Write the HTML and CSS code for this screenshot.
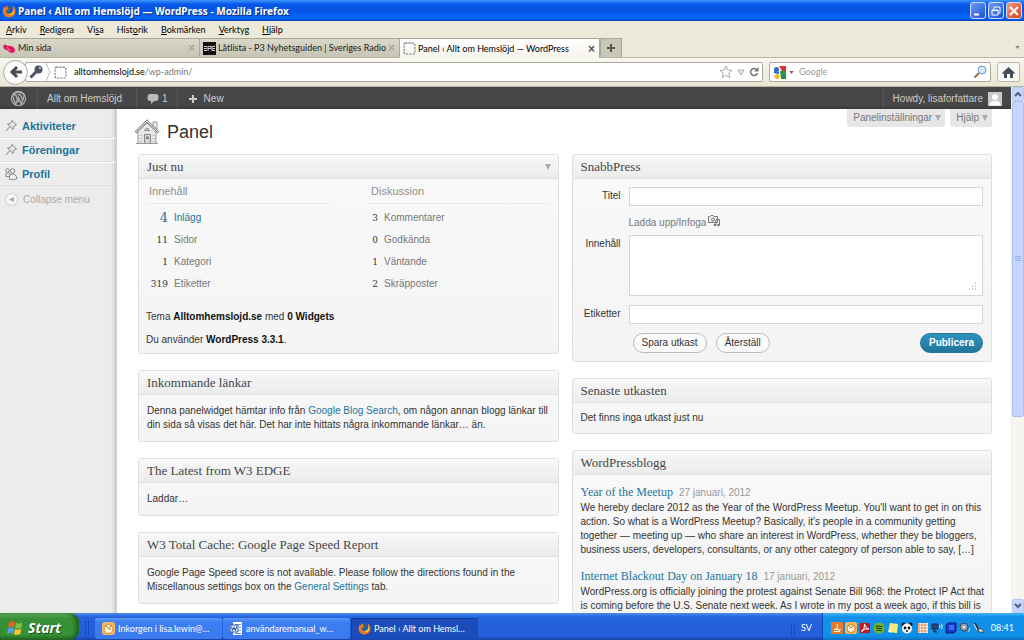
FILE: index.html
```html
<!DOCTYPE html>
<html lang="sv">
<head>
<meta charset="utf-8">
<title>Panel ‹ Allt om Hemslöjd — WordPress</title>
<link rel="stylesheet" href="styles.css">
</head>
<body>
<svg class="defs" width="0" height="0" aria-hidden="true">
  <defs>
    <symbol id="fox" viewBox="0 0 16 16">
      <circle cx="8" cy="8" r="7" fill="#2b5c9e"/>
      <path d="M2 3Q0 7 1 10Q3 15 8 15.500Q15 15 15.500 8Q15 3 12 2Q14 6 12 9Q10 12 7 11Q4 10 5 7L8 6L6 4L7 2Q4 2 3.500 4Z" fill="#ef7a1c"/>
      <path d="M12 2Q14 6 12 9Q10 12 7 11Q10 14 13 11Q15 8 12 2Z" fill="#fbc43c"/>
    </symbol>
    <symbol id="pin" viewBox="0 0 12 12">
      <path d="M7 .5L11.500 5L10 5.500L8.500 7L8 9.500L2.500 4L5 3.500L6.500 2ZM4.500 7L1 11" fill="#e3e3e3" stroke="#888" stroke-width="1"/>
    </symbol>
    <symbol id="dashed" viewBox="0 0 12 12">
      <rect x="1" y="1" width="10" height="10" rx="1" fill="none" stroke="#777" stroke-dasharray="2 1"/>
    </symbol>
  </defs>
</svg>

<header class="titlebar">
  <svg class="i14"><use href="#fox"/></svg>
  <span class="title">Panel ‹ Allt om Hemslöjd — WordPress - Mozilla Firefox</span>
  <button class="win" aria-label="Minimera"><svg viewBox="0 0 14 14"><path d="M3 10.500H8" stroke="#fff" stroke-width="2"/></svg></button>
  <button class="win" aria-label="Återställ fönster"><svg viewBox="0 0 14 14"><path d="M5 5V3H11V9H9M3 6H9V11H3ZM3 6.500H9" fill="none" stroke="#fff"/></svg></button>
  <button class="win close" aria-label="Stäng"><svg viewBox="0 0 14 14"><path d="M3 3L11 11M11 3L3 11" stroke="#fff" stroke-width="2"/></svg></button>
</header>

<nav class="menubar">
  <a href="#"><u>A</u>rkiv</a><a href="#"><u>R</u>edigera</a><a href="#">Vi<u>s</u>a</a><a href="#">Hist<u>o</u>rik</a><a href="#"><u>B</u>okmärken</a><a href="#"><u>V</u>erktyg</a><a href="#"><u>H</u>jälp</a>
</nav>

<div class="tabs">
  <div class="tab"><svg class="i13" viewBox="0 0 13 13"><path d="M0 4Q2 1 5 4Q9 3 12 7Q12 11 9 11Q6 11 4 8Q1 8 0 4Z" fill="#e3175b"/><path d="M4 5L7 9" stroke="#f8a9c4"/></svg><span class="label">Min sida</span><button class="x" aria-label="Stäng flik">×</button></div>
  <div class="tab"><svg class="i13" viewBox="0 0 13 13"><path d="M0 0H13V13H0Z" fill="#111"/><path d="M1 4.500H4M1 6.500H4M1 8.500H4M5 4V9M5 4.500H8V6.500H5M9 4.500H12M9 6.500H12M9 8.500H12M9 4V9" stroke="#ccc"/></svg><span class="label">Låtlista - P3 Nyhetsguiden | Sveriges Radio</span><button class="x" aria-label="Stäng flik">×</button></div>
  <div class="tab active"><svg class="i13"><use href="#dashed"/></svg><span class="label">Panel ‹ Allt om Hemslöjd — WordPress</span><button class="x" aria-label="Stäng flik">×</button></div>
  <button class="newtab" aria-label="Ny flik"><svg class="i10" viewBox="0 0 10 10"><path d="M5 1V9M1 5H9" stroke="#555" stroke-width="2"/></svg></button>
  <svg class="alltabs" viewBox="0 0 6 4"><path d="M0 0H6L3 4Z" fill="#888"/></svg>
</div>

<div class="navbar">
  <button class="back" aria-label="Tillbaka"><svg class="i14" viewBox="0 0 14 14"><path d="M8 2L3 7L8 12M3 7H13" fill="none" stroke="#474d55" stroke-width="3"/></svg></button>
  <div class="url">
    <svg class="i14" viewBox="0 0 14 14"><circle cx="9.500" cy="4.500" r="4" fill="#4b5561"/><path d="M8 6L1.500 12.500" stroke="#4b5561" stroke-width="3"/><circle cx="11" cy="3" r="1" fill="#ddd"/></svg>
    <svg class="chev" viewBox="0 0 5 18"><path d="M0 0L4 9L0 18" fill="none" stroke="#bbb"/></svg>
    <svg class="i13"><use href="#dashed"/></svg>
    <input class="address" aria-label="Adress" value="alltomhemslojd.se/wp-admin/">
    <span class="shown"><b>alltomhemslojd.se</b>/wp-admin/</span>
    <svg class="i14" viewBox="0 0 14 14"><path d="M7 1L8.800 5L13 5.400L9.800 8.200L10.800 12.500L7 10.300L3.200 12.500L4.200 8.200L1 5.400L5.200 5Z" fill="#fff" stroke="#aaa"/></svg>
    <svg class="i10" viewBox="0 0 10 10"><path d="M2 3H8L5 8Z" fill="#eee" stroke="#aaa"/></svg>
    <svg class="i10" viewBox="0 0 10 10"><path d="M8.500 6A3.500 3.500 0 1 1 7.500 2.500" fill="none" stroke="#777" stroke-width="1.500"/><path d="M9.500 0V4.500H5Z" fill="#777"/></svg>
  </div>
  <div class="search">
    <svg class="i13" viewBox="0 0 13 13"><path d="M0 0H6V6H0Z" fill="#fff"/><circle cx="3.500" cy="3.500" r="2.500" fill="#2b68c9"/><path d="M6 0H13V5H9Z" fill="#d9342b"/><path d="M7 5H13V13H8Z" fill="#27984a"/><circle cx="4" cy="10.500" r="2.500" fill="#f1b824"/><path d="M1 6L6 7" stroke="#2b68c9" stroke-width="2"/></svg>
    <svg class="drop" viewBox="0 0 6 4"><path d="M0 0H6L3 4Z" fill="#a55"/></svg>
    <input aria-label="Sök" placeholder="Google">
    <svg class="i14" viewBox="0 0 14 14"><path d="M6 8L1.500 12.500" stroke="#a56a3a" stroke-width="2"/><circle cx="9" cy="5" r="4" fill="#cfe8fa" stroke="#6e9cc4"/></svg>
  </div>
  <button class="home" aria-label="Hem"><svg class="i13" viewBox="0 0 13 13"><path d="M0 7L6.500 1L13 7L12 8L11 7V12H8V8H5V12H2V7L1 8Z" fill="#454f5c"/></svg></button>
</div>

<div class="viewport">
  <div class="page">
    <div class="adminbar">
      <a href="#" class="wp" aria-label="WordPress"><svg viewBox="0 0 18 18"><circle cx="9" cy="9" r="7.500" fill="none" stroke="#aaa" stroke-width="1.300"/><path d="M2.500 6L6 15L9 8L12 15L15 6Q14 2.500 9 2.500Q5 2.500 3.500 5H6L9 13M8 5H11L14 12" fill="none" stroke="#aaa" stroke-width="1.600"/></svg></a>
      <a href="#" class="site">Allt om Hemslöjd</a>
      <a href="#" class="bubble"><svg class="i12" viewBox="0 0 12 12"><path d="M3 1H9Q11.500 1 11.500 4Q11.500 8 9 8H7L4 11V8H3Q.5 8 .5 4.500Q.5 1 3 1Z" fill="#bbb"/></svg>1</a>
      <a href="#" class="new"><svg class="i10" viewBox="0 0 10 10"><path d="M5 1V9M1 5H9" stroke="#ccc" stroke-width="2"/></svg>New</a>
      <a href="#" class="user">Howdy, lisaforfattare<svg class="i14" viewBox="0 0 14 14"><path d="M0 0H14V14H0Z" fill="#c9c9c9"/><circle cx="7" cy="5" r="3" fill="#fff"/><path d="M1.500 13.500Q2 9 5.500 9H8.500Q12 9 12.500 13.500Z" fill="#fff"/></svg></a>
    </div>
    <div class="columns">
      <nav class="side">
        <a href="#"><svg class="i12"><use href="#pin"/></svg>Aktiviteter</a>
        <a href="#"><svg class="i12"><use href="#pin"/></svg>Föreningar</a>
        <a href="#"><svg class="i12" viewBox="0 0 12 12"><g fill="#eee" stroke="#888"><circle cx="2.500" cy="2.500" r="1.800"/><path d="M1 8.500Q0 5 3 4.500L5 6V8.500Z"/><circle cx="7.500" cy="3" r="2.300"/><path d="M4.500 11.500Q3.500 8.500 6 6H9L11.500 8.500V11L9.500 11.500Z"/></g></svg>Profil</a>
        <button class="collapse"><svg class="i13" viewBox="0 0 13 13"><circle cx="6.500" cy="6.500" r="6" fill="#f7f7f7" stroke="#ccc"/><path d="M9 4V9L4 6.500Z" fill="#aaa"/></svg>Collapse menu</button>
      </nav>
      <main>
        <div class="head">
          <svg class="house" viewBox="0 0 26 26"><path d="M19 3H23V11L19 8Z" fill="#eee" stroke="#999"/><path d="M4 12V24.500H22V12L13 4Z" fill="#e8e8e8" stroke="#999"/><path d="M1.500 13.500L13 2L24.500 13.500" fill="none" stroke="#888" stroke-width="2.500"/><path d="M1.500 13.500L13 2L24.500 13.500" fill="none" stroke="#e8e8e8" stroke-width="1"/><path d="M10.500 15.500H16.500V24.500H10.500ZM10.500 11.500Q13 7 15.500 11.500Z" fill="#d4d4d4" stroke="#888"/><path d="M5 16.500H9M5 19.500H9M18 16.500H21M18 19.500H21M5 22.500H9M18 22.500H21" stroke="#ccc"/><path d="M12 17.500H15V20H12Z" fill="#888"/><path d="M2 24.500H24" stroke="#999"/></svg>
          <h1>Panel</h1>
          <div class="screen"><button>Panelinställningar <svg class="tri" viewBox="0 0 6 6"><path d="M0 0H6L3 6Z" fill="#aaa"/></svg></button><button>Hjälp <svg class="tri" viewBox="0 0 6 6"><path d="M0 0H6L3 6Z" fill="#aaa"/></svg></button></div>
        </div>
        <div class="boards">
          <div class="col">
            <section class="box">
              <h2>Just nu <svg class="tri" viewBox="0 0 6 6"><path d="M0 0H6L3 6Z" fill="#aaa"/></svg></h2>
              <div class="now">
                <div class="stats">
                  <table>
                    <caption>Innehåll</caption>
                    <tr class="hot"><td>4</td><td><a href="#">Inlägg</a></td></tr>
                    <tr><td>11</td><td>Sidor</td></tr>
                    <tr><td>1</td><td>Kategori</td></tr>
                    <tr><td>319</td><td>Etiketter</td></tr>
                  </table>
                  <table class="talk">
                    <caption>Diskussion</caption>
                    <tr><td>3</td><td>Kommentarer</td></tr>
                    <tr><td>0</td><td>Godkända</td></tr>
                    <tr><td>1</td><td>Väntande</td></tr>
                    <tr><td>2</td><td>Skräpposter</td></tr>
                  </table>
                </div>
                <p>Tema <b>Alltomhemslojd.se</b> med <b>0 Widgets</b></p>
                <p>Du använder <b>WordPress 3.3.1</b>.</p>
              </div>
            </section>
            <section class="box">
              <h2>Inkommande länkar</h2>
              <p class="text">Denna panelwidget hämtar info från <a href="#">Google Blog Search</a>, om någon annan blogg länkar till<br>din sida så visas det här. Det har inte hittats några inkommande länkar… än.</p>
            </section>
            <section class="box">
              <h2>The Latest from W3 EDGE</h2>
              <p class="text">Laddar…</p>
            </section>
            <section class="box">
              <h2>W3 Total Cache: Google Page Speed Report</h2>
              <p class="text">Google Page Speed score is not available. Please follow the directions found in the<br>Miscellanous settings box on the <a href="#">General Settings</a> tab.</p>
            </section>
          </div>
          <div class="col">
            <section class="box">
              <h2>SnabbPress</h2>
              <form class="press">
                <label for="t">Titel</label><input id="t" type="text">
                <div class="media">Ladda upp/Infoga <svg class="i12" viewBox="0 0 12 12"><path d="M.5 1.500H2L3 .5H5L6 1.500H9.500V7.500H.5Z" fill="#eee" stroke="#777"/><circle cx="5" cy="4.500" r="1.500" fill="none" stroke="#777"/><path d="M8 10V4.500H11.500V10" fill="none" stroke="#777"/><circle cx="7" cy="10" r="1.300" fill="#777"/><circle cx="10.500" cy="10" r="1.300" fill="#777"/></svg></div>
                <label for="c">Innehåll</label>
                <div class="area"><textarea id="c"></textarea><svg class="grip" viewBox="0 0 9 9"><path d="M7 1h1M4 4h1M7 4h1M1 7h1M4 7h1M7 7h1" stroke="#999"/></svg></div>
                <label for="e">Etiketter</label><input id="e" type="text">
                <div class="actions"><button type="button">Spara utkast</button><button type="reset">Återställ</button><button type="button" class="primary">Publicera</button></div>
              </form>
            </section>
            <section class="box">
              <h2>Senaste utkasten</h2>
              <p class="text short">Det finns inga utkast just nu</p>
            </section>
            <section class="box">
              <h2>WordPressblogg</h2>
              <article>
                <h3><a href="#">Year of the Meetup</a><time>27 januari, 2012</time></h3>
                <p>We hereby declare 2012 as the Year of the WordPress Meetup. You'll want to get in on this<br>action. So what is a WordPress Meetup? Basically, it's people in a community getting<br>together — meeting up — who share an interest in WordPress, whether they be bloggers,<br>business users, developers, consultants, or any other category of person able to say, […]</p>
              </article>
              <article>
                <h3><a href="#">Internet Blackout Day on January 18</a><time>17 januari, 2012</time></h3>
                <p>WordPress.org is officially joining the protest against Senate Bill 968: the Protect IP Act that<br>is coming before the U.S. Senate next week. As I wrote in my post a week ago, if this bill is</p>
              </article>
            </section>
          </div>
        </div>
      </main>
    </div>
  </div>
  <div class="scroll">
    <button aria-label="Upp"><svg class="i10" viewBox="0 0 10 10"><path d="M2 7L5 4L8 7" fill="none" stroke="#4d6185" stroke-width="2"/></svg></button>
    <div class="thumb"><svg class="i10" viewBox="0 0 10 10"><path d="M2 2.500H8M2 4.500H8M2 6.500H8" stroke="#9db4ee"/></svg></div>
    <button aria-label="Ned"><svg class="i10" viewBox="0 0 10 10"><path d="M2 3L5 6L8 3" fill="none" stroke="#4d6185" stroke-width="2"/></svg></button>
  </div>
</div>

<footer class="taskbar">
  <button class="start"><svg class="flag" viewBox="0 0 16 16"><path d="M2 3Q5 1 7.500 3L6.500 8Q4 6 1 8Z" fill="#ee5a2a"/><path d="M8.500 3.500Q11 5 14.500 3L13.500 8Q10.500 9.500 7.500 8.500Z" fill="#7ac043"/><path d="M1 9Q4 7 6.500 9L5.500 14Q3 12 0 14Z" fill="#5a9cf0"/><path d="M7.500 9.500Q10 11 13.500 9L12.500 14Q9.500 15.500 6.500 14.500Z" fill="#fbc52d"/></svg>Start</button>
  <span class="dots"></span>
  <button class="task"><svg class="i13" viewBox="0 0 13 13"><rect width="13" height="13" rx="3" fill="#f6b765"/><circle cx="6.500" cy="7" r="4.500" fill="#fff7e0" stroke="#d98525"/><path d="M3 3L6.500 6L10 3M6.500 7H9" fill="none" stroke="#b96b16"/></svg>Inkorgen i lisa.lewin@…</button>
  <button class="task"><svg class="i13" viewBox="0 0 13 13"><path d="M3 0H12V13H3Z" fill="#fff"/><path d="M5 2.500H11M9 5.500H11M9 8.500H11M5 11.500H11" stroke="#7a98cc"/><path d="M0 3H8V10H0Z" fill="#dce7f8" stroke="#315ca8"/><path d="M1.500 4.500L2.500 8.500L4 5.500L5.500 8.500L6.500 4.500" fill="none" stroke="#244f9d"/></svg>användaremanual_w…</button>
  <button class="task on"><svg class="i13"><use href="#fox"/></svg>Panel ‹ Allt om Hemsl…</button>
  <div class="tray-left"><span class="dots"></span>SV</div>
  <div class="tray">
    <svg class="i12" viewBox="0 0 12 12"><rect width="12" height="12" rx="1" fill="#e87b25"/><path d="M6 2Q8 4 5 7M3 7.500H8M3 9.500H9M8.500 7Q10 6 8.500 9" fill="none" stroke="#fff"/></svg>
    <svg class="i12" viewBox="0 0 12 12"><rect width="12" height="12" rx="2" fill="#f5b55b"/><circle cx="6" cy="6.500" r="4" fill="#fff7e0" stroke="#c98428"/><path d="M3 3L6 6L9 3" fill="none" stroke="#b96b16"/></svg>
    <svg class="i12" viewBox="0 0 12 12"><path d="M1 1H11V11H1Z" fill="#c6161d"/><path d="M3 10Q6 6 5.500 2Q7 7 10 7Q6 6 2 9" fill="none" stroke="#fff"/></svg>
    <svg class="i12" viewBox="0 0 12 12"><circle cx="6" cy="6" r="5.500" fill="#75b51f"/><path d="M2.500 4.500Q6 3 9.500 5M3 6.500Q6 5.500 9 7M3.500 8.500Q6 7.500 8.500 9" fill="none" stroke="#17350b"/></svg>
    <svg class="i12" viewBox="0 0 12 12"><path d="M3 1L11 2L10 11L1 10Z" fill="#f6ee78"/><path d="M1 10L4 7L5 10.500Z" fill="#fffbd0"/></svg>
    <svg class="i12" viewBox="0 0 12 12"><circle cx="2.500" cy="2.500" r="2" fill="#111"/><circle cx="9.500" cy="2.500" r="2" fill="#111"/><circle cx="6" cy="6.500" r="5" fill="#fff"/><circle cx="4" cy="6" r="1.400" fill="#111"/><circle cx="8" cy="6" r="1.400" fill="#111"/><circle cx="6" cy="9" r="1" fill="#111"/></svg>
    <svg class="i12 gap" viewBox="0 0 12 12"><path d="M1 1H11V11H1Z" fill="#fff"/><path d="M2 1V11M5 1V11M8 1V11M1 3H11M1 6H11M1 9H11" stroke="#e58a4b"/></svg>
    <svg class="i12" viewBox="0 0 12 12"><path d="M1 2H7V7H1ZM3 7V10H6" fill="#26457f" stroke="#17264a"/><path d="M8.500 3Q9.500 4.500 8.500 6M10.500 2Q12 4.500 10.500 7" fill="none" stroke="#dceaff"/></svg>
    <svg class="i12" viewBox="0 0 12 12"><path d="M3 1H11V9L9 11H1V3Z" fill="#1638c8" stroke="#0a1c70"/><path d="M4 3H9V8H4Z" fill="#3e6cf0"/></svg>
    <svg class="i12" viewBox="0 0 12 12"><circle cx="5" cy="5" r="4" fill="#8d98a5" stroke="#3e4c5b"/><circle cx="5" cy="5" r="1.500" fill="#dfe6ee"/><path d="M9 10Q11 8 11 6" fill="none" stroke="#ddd"/></svg>
    <svg class="i12" viewBox="0 0 12 12"><path d="M2 1L5 7L7 10" fill="none" stroke="#333" stroke-width="2"/><path d="M1 2L4 8" stroke="#eee"/><path d="M5 7H9L11 10H6Z" fill="#e9e9d0" stroke="#333" stroke-width=".7"/></svg>
    <span class="clock">08:41</span>
  </div>
</footer>
</body>
</html>
```
FILE: styles.css
```css
* { box-sizing: border-box; }
body {
  margin: 0;
  height: 100vh;
  display: flex;
  flex-direction: column;
  overflow: hidden;
  background: #ece9d8;
  color: #333;
  font: 10px/14px "Liberation Sans", Arial, sans-serif;
}
a { color: #21759b; text-decoration: none; }
button, input, textarea { font: inherit; color: inherit; margin: 0; }
button { padding: 0; border: 0; background: none; }
h1, h2, h3, p { margin: 0; font-weight: normal; }
svg { flex: none; display: block; }
.defs { position: absolute; }
.i10 { width: 10px; height: 10px; }
.i12 { width: 12px; height: 12px; }
.i13 { width: 13px; height: 13px; }
.i14 { width: 14px; height: 14px; }
.tri { width: 6px; height: 6px; }
.drop, .alltabs { width: 5px; height: 3px; }

/* Window frame */
.titlebar, .menubar, .tabs, .navbar, .taskbar { flex: none; display: flex; align-items: center; font-family: Lato, "DejaVu Sans Condensed", sans-serif; font-size: 9px; }
.titlebar { height: 21px; padding: 0 2px; gap: 2px; background: linear-gradient(#3d95ff, #0658e8 20%, #0553e2 50%, #0267ff 85%, #0340c0); color: #fff; }
.title { flex: 1; font-family: "Noto Sans", sans-serif; font-size: 10px; font-weight: bold; text-shadow: 1px 1px #0a2f80; }
.win { width: 16px; height: 17px; border: 1px solid #cfe0ff; border-radius: 3px; background: linear-gradient(135deg, #6f9bf5, #1e50d8); }
.win.close { background: linear-gradient(135deg, #f09a80, #d8401a); }
.menubar { height: 17px; padding: 0 6px; gap: 13px; }
.menubar a { color: #000; }
.tabs { height: 20px; border-bottom: 1px solid #b9b6a5; align-items: stretch; }
.tab { flex: 0 1 200px; display: flex; align-items: center; gap: 2px; padding: 0 4px 0 3px; border: 1px solid #a9a797; border-left: 0; border-bottom: 0; background: linear-gradient(#dad8c8, #c6c4b4); color: #222; min-width: 0; }
.tab .label { flex: 1; white-space: nowrap; overflow: hidden; }
.tab.active { background: linear-gradient(#fff, #f5f4ec); margin-bottom: -1px; color: #000; }
.x { font: bold 12px/12px "Liberation Sans", sans-serif; color: #aaa897; }
.active .x { color: #555; }
.newtab { width: 22px; display: grid; place-items: center; border: 1px solid #a9a797; border-bottom: 0; background: #c9c7b8; }
.alltabs { margin: 8px 4px 0 auto; }
.navbar { height: 29px; padding: 0 4px 0 3px; gap: 6px; background: linear-gradient(#f8f7f0, #e9e6d5); border-bottom: 1px solid #b9b6a5; }
.back { width: 25px; height: 25px; display: grid; place-items: center; border: 1px solid #aaa; border-radius: 50%; background: #fbfaf6; margin-right: -9px; z-index: 1; }
.url, .search { display: flex; align-items: center; height: 20px; border: 1px solid #aaa899; border-radius: 2px; background: #fff; }
.url { flex: 1; gap: 3px; padding: 0 3px; position: relative; }
.chev { width: 5px; height: 18px; }
.address { flex: 1; min-width: 0; border: 0; padding: 0; background: none; color: transparent; }
.shown { position: absolute; left: 48px; color: #777; pointer-events: none; }
.shown b { font-weight: normal; color: #000; }
.search { width: 222px; gap: 3px; padding: 0 3px; }
.search input { flex: 1; min-width: 0; border: 0; padding: 0 0 0 2px; background: none; }
.search input::placeholder { color: #999; }
.home { width: 23px; height: 20px; display: grid; place-items: center; border: 1px solid #bbb9aa; border-radius: 2px; background: #f8f7f1; }

/* Page */
.viewport { flex: 1; min-height: 0; display: flex; background: #fff; }
.page { flex: 1; min-width: 0; display: flex; flex-direction: column; overflow: hidden; }
.adminbar { flex: none; height: 22px; padding-top: 1px; display: flex; background: linear-gradient(#474747 80%, #3a3a3a); }
.adminbar a { display: flex; align-items: center; gap: 5px; padding: 0 9px; color: #ccc; border-right: 1px solid #555; }
.adminbar .wp { padding: 0 10px; }
.adminbar .wp svg { width: 17px; height: 17px; }
.adminbar .site { padding-right: 14px; }
.adminbar .bubble { padding: 0 9px 0 10px; gap: 3px; }
.adminbar .new { border: 0; gap: 6px; padding-left: 10px; }
.adminbar .user { margin-left: auto; border: 0; border-left: 1px solid #555; }
.columns { flex: 1; min-height: 0; display: flex; }
.side { flex: none; width: 117px; padding-top: 5px; background: #ececec; border-right: 1px solid #ccc; box-shadow: inset -4px 0 4px -3px #bbb; }
.side a { display: flex; align-items: center; gap: 5px; height: 24px; padding-left: 5px; border-bottom: 1px solid #dedede; font-weight: bold; font-size: 11px; }
.side a + a { border-top: 1px solid #f9f9f9; }
.collapse { display: flex; align-items: center; gap: 5px; height: 27px; padding-left: 5px; color: #aaa; }
main { flex: 1; min-width: 0; padding: 0 19px 0 21px; }
.head { display: flex; align-items: center; height: 45px; margin-left: -4px; gap: 7px; }
.house { width: 26px; height: 26px; }
h1 { font-size: 18px; line-height: 24px; }
.screen { display: flex; gap: 5px; margin-left: auto; align-self: flex-start; }
.screen button { display: flex; align-items: center; gap: 3px; height: 18px; padding: 0 4px 0 6px; border-radius: 0 0 3px 3px; background: #e6e6e6; color: #777; }
.boards { display: grid; grid-template-columns: 1fr 1fr; gap: 13px; }
.col { display: flex; flex-direction: column; gap: 16px; min-width: 0; }
.box { border: 1px solid #dfdfdf; border-radius: 3px; background: linear-gradient(#f9f9f9, #f4f4f4); }
h2 { display: flex; align-items: center; justify-content: space-between; height: 24px; padding: 1px 7px 0 8px; border-bottom: 1px solid #dfdfdf; background: linear-gradient(#f8f8f8, #ebebeb); font: 13px/18px "Liberation Serif", "Times New Roman", serif; color: #464646; }
.text { padding: 9px 8px; white-space: nowrap; }
.text.short { padding: 8px; }
.now { padding: 0 7px; }
.stats { display: grid; grid-template-columns: 183px 183px; gap: 39px; }
.now table { border-collapse: collapse; width: 183px; }
caption { height: 25px; padding: 5px 3px 0; border-bottom: 1px solid #ececec; text-align: left; font-size: 11px; color: #8f8f8f; }
.now td { height: 22px; padding: 0; color: #777; }
.now tr:first-child td { height: 25px; padding-top: 3px; }
.now tr td:first-child { width: 28px; padding-right: 6px; text-align: right; font-family: "DejaVu Serif", serif; font-size: 9px; color: #333; }
.now .talk td:first-child { width: 16px; }
.now tr.hot td:first-child { color: #21759b; font-size: 13px; }
.now b { color: #111; }
.now p { margin: 14px 0 0; line-height: 9px; }
.now .stats + p { margin-top: 17px; }
.now p:last-child { padding-bottom: 9px; }
.press { display: grid; grid-template-columns: 40px 1fr; column-gap: 8px; padding: 8px; }
.press label { text-align: right; padding-top: 2px; }
.press input, .press textarea { display: block; width: 100%; border: 1px solid #d6d6d6; border-radius: 0; background: #fff; padding: 2px; }
.press input { height: 19px; }
.press textarea { height: 61px; resize: none; }
.media { grid-column: 2; display: flex; align-items: center; gap: 2px; height: 29px; padding-top: 4px; color: #777; }
.media svg { margin-bottom: 3px; }
.area { position: relative; margin-bottom: 9px; }
.grip { position: absolute; right: 6px; bottom: 5px; width: 9px; height: 9px; }
.actions { grid-column: 2; display: flex; gap: 9px; padding: 9px 0 0 4px; }
.actions button { height: 20px; padding: 0 8px; border: 1px solid #bbb; border-radius: 10px; background: #fafafa; }
.actions .primary { margin-left: auto; border-color: #21759b; background: linear-gradient(#2e93bb, #21759b); color: #fff; font-weight: bold; }
article { padding: 10px 8px 0; white-space: nowrap; }
article + article { padding-top: 12px; }
h3 { display: flex; align-items: baseline; gap: 6px; font: 12px/15px "Liberation Serif", "Times New Roman", serif; }
time { font: 10px "Liberation Sans", Arial, sans-serif; color: #999; }
article p { padding-top: 1px; }

.scroll { flex: none; width: 13px; display: flex; flex-direction: column; background: #f6f5ee; border-left: 1px solid #eee; }
.scroll button { height: 14px; display: grid; place-items: center; border: 1px solid #b4c8f6; border-radius: 2px; background: #c6d6fd; }
.thumb { height: 60%; margin-bottom: auto; display: grid; place-items: center; border: 1px solid #aabff0; border-radius: 2px; background: #c5d5fd; }

/* Taskbar */
.taskbar { height: 27px; align-items: stretch; background: linear-gradient(#4a8df0, #2463db 15%, #245edb 85%, #1941a5); color: #fff; }
.start { display: flex; align-items: center; gap: 4px; width: 79px; padding: 2px 0 0 7px; border-radius: 0 9px 9px 0; background: linear-gradient(#69b569, #389038 20%, #359235 80%, #256b25); box-shadow: inset -3px 0 4px #1c5c1c; font: italic bold 14px "Open Sans", sans-serif; text-shadow: 1px 1px 1px #164a16; }
.flag { width: 17px; height: 17px; }
.dots { width: 4px; margin: 8px 6px 5px; border-left: 1px dotted #143a94; border-right: 1px dotted #143a94; }
.task { flex: 0 1 127px; display: flex; align-items: center; gap: 3px; margin: 5px 1px 1px 0; padding: 0 7px; border-radius: 2px; background: linear-gradient(#5a98f8, #3c7ff2 20%, #3a79ee); white-space: nowrap; overflow: hidden; }
.task.on { background: #1b4dba; box-shadow: inset 1px 1px 1px #123a94; }
.tray-left { margin-left: auto; display: flex; align-items: center; padding: 3px 10px 0 0; }
.tray-left .dots { align-self: stretch; }
.tray { display: flex; align-items: center; gap: 2px; padding: 3px 10px 0 8px; border-left: 1px solid #0e4cb0; background: linear-gradient(#3fb5f5, #1290e9 15%, #1190e8 85%, #0d6fc0); }
.gap { margin-left: 2px; }
.clock { margin-left: 4px; }
```
